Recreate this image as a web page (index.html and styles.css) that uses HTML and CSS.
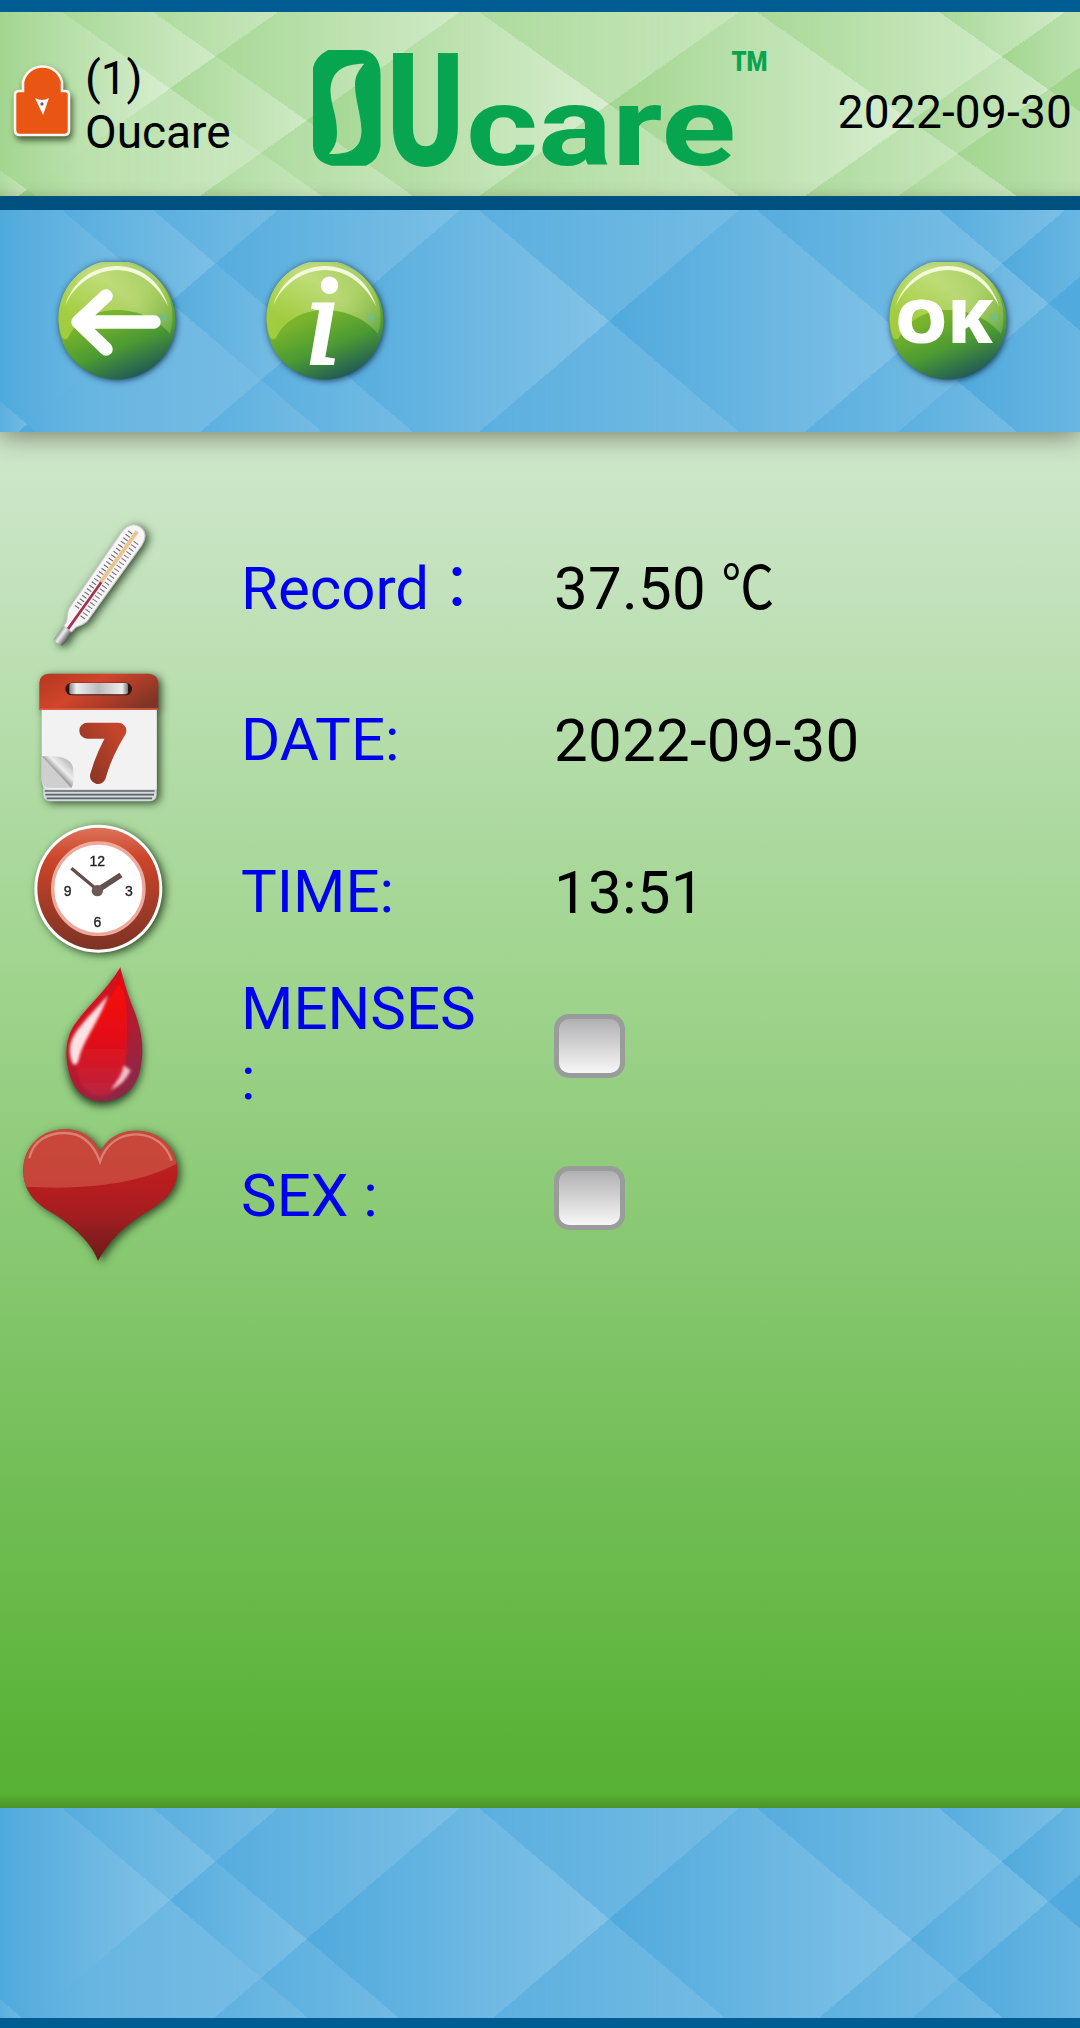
FILE: index.html
```html
<!DOCTYPE html>
<html lang="en">
<head>
<meta charset="utf-8">
<title>OUcare</title>
<link rel="stylesheet" href="styles.css">
</head>
<body>
<svg class="defs" width="0" height="0" aria-hidden="true">
  <defs>
    <linearGradient id="g0"><stop offset="0" stop-color="#fff" stop-opacity="0"/><stop offset="1" stop-color="#fff" stop-opacity="1"/></linearGradient>
    <linearGradient id="g1"><stop offset="0" stop-color="#fff" stop-opacity=".12"/><stop offset="1" stop-color="#fff" stop-opacity=".85"/></linearGradient>
    <linearGradient id="g2"><stop offset="0" stop-color="#fff" stop-opacity=".22"/><stop offset="1" stop-color="#fff" stop-opacity=".7"/></linearGradient>
    <linearGradient id="g3"><stop offset="0" stop-color="#fff" stop-opacity="0"/><stop offset="1" stop-color="#fff" stop-opacity=".5"/></linearGradient>
    <linearGradient id="g4"><stop offset="0" stop-color="#fff" stop-opacity=".15"/><stop offset=".25" stop-color="#fff" stop-opacity=".45"/><stop offset="1" stop-color="#fff" stop-opacity=".75"/></linearGradient>
    <symbol id="facets" viewBox="0 0 1080 230" preserveAspectRatio="none">
      <g shape-rendering="crispEdges">
        <polygon fill="url(#g0)" points="0,0 62,0 170,95.5 27,222 0,198"/>
        <polygon fill="url(#g2)" points="0,198 27,222 18,230 0,230"/>
        <polygon fill="url(#g1)" points="62,0 153,0 215.5,55.3 170,95.5"/>
        <polygon fill="url(#g2)" points="153,0 278,0 215.5,55.3"/>
        <polygon fill="url(#g4)" points="170,95.5 261,176 200,230 36,230 27,222"/>
        <polygon fill="url(#g1)" points="215.5,55.3 306.5,135.8 261,176 170,95.5"/>
        <polygon fill="url(#g1)" points="278,0 460,0 306.5,135.8 215.5,55.3"/>
        <polygon fill="url(#g2)" points="261,176 322,230 200,230"/>
        <polygon fill="url(#g2)" points="306.5,135.8 413,230 322,230 261,176"/>
        <polygon fill="url(#g0)" points="460,0 479,0 609,115 479,230 413,230 306.5,135.8"/>
        <polygon fill="url(#g2)" points="479,0 739,0 609,115"/>
        <polygon fill="url(#g2)" points="609,115 739,230 479,230"/>
        <polygon fill="url(#g0)" points="739,0 757,0 911,136.2 805,230 739,230 609,115"/>
        <polygon fill="url(#g1)" points="757,0 939,0 1002,55.7 911,136.2"/>
        <polygon fill="url(#g1)" points="939,0 1065,0 1002,55.7"/>
        <polygon fill="url(#g1)" points="1002,55.7 1048.5,96.9 957.5,177.4 911,136.2"/>
        <polygon fill="url(#g2)" points="911,136.2 957.5,177.4 898,230 805,230"/>
        <polygon fill="url(#g2)" points="957.5,177.4 1017,230 898,230"/>
        <polygon fill="url(#g3)" points="1065,0 1080,0 1080,69 1048.5,96.9 1002,55.7"/>
        <polygon fill="url(#g3)" points="1048.5,96.9 1080,124.7 1080,230 1017,230 957.5,177.4"/>
      </g>
    </symbol>

    <linearGradient id="ballBase" x1=".3" y1="0" x2=".7" y2="1">
      <stop offset="0" stop-color="#9cc92c"/><stop offset=".45" stop-color="#76b22c"/><stop offset=".7" stop-color="#4b9a33"/><stop offset="1" stop-color="#1b535a"/>
    </linearGradient>
    <linearGradient id="ballGloss" x1=".1" y1=".7" x2=".75" y2=".1">
      <stop offset="0" stop-color="#a6cf42"/><stop offset=".6" stop-color="#c5df82"/><stop offset="1" stop-color="#b2d476"/>
    </linearGradient>
    <linearGradient id="glossFade" x1="0" y1="0" x2="1" y2=".7">
      <stop offset="0" stop-color="#fff"/><stop offset=".6" stop-color="#ccc"/><stop offset="1" stop-color="#222"/>
    </linearGradient>
    <mask id="glossMask"><rect width="118" height="118" fill="url(#glossFade)"/></mask>
    <symbol id="ball" viewBox="0 0 118 118">
      <circle cx="59" cy="59" r="58.5" fill="url(#ballBase)"/>
      <path d="M3 72A57 57 0 1 1 112 72C100 57 80 48 59 48S18 58 10 76Q5 80 3 72Z" fill="url(#ballGloss)" mask="url(#glossMask)"/>
      <path d="M7 44C14 20 35 4 59 4S103 20 110 44C99 22 80 8 59 8S16 22 7 44Z" fill="#f3fadb"/>
      <circle cx="105" cy="56" r="4" fill="#6fc08c" opacity=".7"/>
    </symbol>

    <linearGradient id="redBar" x1="0" y1=".2" x2="1" y2=".7">
      <stop offset="0" stop-color="#b83a22"/><stop offset=".4" stop-color="#d1452b"/><stop offset=".7" stop-color="#a93c28"/><stop offset="1" stop-color="#7c3526"/>
    </linearGradient>
    <linearGradient id="ring" x1="0" y1="0" x2="0" y2="1">
      <stop offset="0" stop-color="#dc7259"/><stop offset=".25" stop-color="#cc452a"/><stop offset=".6" stop-color="#a63c28"/><stop offset="1" stop-color="#7d3324"/>
    </linearGradient>
    <linearGradient id="seven" x1="0" y1="1" x2="1" y2="0">
      <stop offset="0" stop-color="#8c3526"/><stop offset="1" stop-color="#c5452a"/>
    </linearGradient>
    <linearGradient id="clip"><stop offset="0" stop-color="#888"/><stop offset=".12" stop-color="#eee"/><stop offset=".5" stop-color="#bbb"/><stop offset=".9" stop-color="#eee"/><stop offset="1" stop-color="#777"/></linearGradient>
    <linearGradient id="curl" x1="0" y1="1" x2="1" y2="0"><stop offset="0" stop-color="#999"/><stop offset=".42" stop-color="#777"/><stop offset=".62" stop-color="#eee"/><stop offset="1" stop-color="#999"/></linearGradient>
    <linearGradient id="dropFill" gradientUnits="userSpaceOnUse" x1="0" y1="60" x2="0" y2="440"><stop offset="0" stop-color="#ff0400"/><stop offset=".6" stop-color="#df101b"/><stop offset="1" stop-color="#b92540"/></linearGradient>
    <linearGradient id="dropEdge" x1=".2" y1="0" x2=".8" y2="1"><stop offset="0" stop-color="#f00810"/><stop offset="1" stop-color="#86294a"/></linearGradient>
    <linearGradient id="heartFill" x1="0" y1="0" x2="0" y2="1"><stop offset="0" stop-color="#c0281f"/><stop offset=".4" stop-color="#b91c1e"/><stop offset=".65" stop-color="#a41e20"/><stop offset="1" stop-color="#6a1b1b"/></linearGradient>
    <linearGradient id="tip" x1="0" y1="0" x2="0" y2="1"><stop offset="0" stop-color="#999"/><stop offset=".35" stop-color="#eee"/><stop offset="1" stop-color="#555"/></linearGradient>
    <clipPath id="heartClip"><path d="M294 932C276 880 220 826 150 785C104 758 70 722 70 662C70 588 126 538 194 538C244 538 280 562 300 605C322 564 360 542 410 542C476 542 532 592 532 662C532 722 490 757 436 789C375 826 330 868 294 932Z"/></clipPath>
    <filter id="soft" x="-30%" y="-30%" width="160%" height="160%"><feGaussianBlur stdDeviation="4"/></filter>
  </defs>
</svg>

<div class="screen">
  <header class="header">
    <svg class="facets" aria-hidden="true"><use href="#facets"/></svg>
    <div class="user">
      <svg class="lock" viewBox="0 0 62 78">
        <path d="M11 31V22A20 20 0 0 1 50 22V31H53Q57 31 57 35V70Q57 75 52 75H8Q3 75 3 70V35Q3 31 7 31Z" fill="#e95513" stroke="#fdf6ee" stroke-width="2.6"/>
        <path d="M23 38Q30 42 37 38L31 55Z" fill="#fff"/><circle cx="30" cy="44" r="1.700" fill="#667"/>
      </svg>
      <div class="user-name">(1)<br>Oucare</div>
    </div>
    <svg class="logo" viewBox="310 45 460 125">
      <path fill="#08a551" fill-rule="evenodd" d="M328 50H362C374 51 380.500 61 380.500 74V146Q379 160 366 165.700H332Q314 162 313 146V68Q315 57 328 50ZM364.300 63.700C342 63.700 330 72 330.600 93C331 104 337 116 337 132C337 143 334 148 329 154C350 154.500 361.500 149 361.500 130C361 114 355 100 355 84C355 76 359 70 364.300 63.700Z"/>
      <text class="logo-u" x="387" y="165" textLength="77" lengthAdjust="spacingAndGlyphs">U</text>
      <text class="logo-care" x="466" y="165" textLength="270" lengthAdjust="spacingAndGlyphs">care</text>
      <text class="logo-tm" x="731.500" y="71" textLength="36" lengthAdjust="spacingAndGlyphs">TM</text>
    </svg>
    <div class="today">2022-09-30</div>
  </header>

  <nav class="toolbar">
    <svg class="facets" aria-hidden="true"><use href="#facets"/></svg>
    <svg class="button" viewBox="0 0 118 118">
      <use href="#ball"/>
      <path d="M48 34L20 60L48 87M22 60H96" fill="none" stroke="#fff" stroke-width="13.500" stroke-linecap="round" stroke-linejoin="round"/>
    </svg>
    <svg class="button" viewBox="0 0 118 118">
      <use href="#ball"/>
      <text class="glyph-i" x="39" y="101">i</text>
    </svg>
    <svg class="button button-ok" viewBox="0 0 118 118">
      <use href="#ball"/>
      <text class="glyph-ok" x="6" y="81" textLength="98" lengthAdjust="spacingAndGlyphs">OK</text>
    </svg>
  </nav>

  <main class="record">
    <div class="row">
      <svg class="icon" viewBox="0 36 720 456">
        <g transform="translate(176 424) rotate(-54.500) scale(1.040 1.150)">
          <path d="M-4 -13H46V15H-4Q-9 0 -4 -13Z" fill="url(#tip)"/>
          <path d="M44 -12L62 -14Q78 -24 94 -28L365 -32Q405 -28 405 0T365 31L94 30Q78 26 62 15L44 13Z" fill="#f7f5f7" stroke="#c9c9c9" stroke-width="3"/>
          <path d="M110 -13H385" stroke="#666" stroke-width="14" stroke-dasharray="3 9"/>
          <path d="M95 15H370" stroke="#777" stroke-width="15" stroke-dasharray="3 9"/>
          <path d="M205 0H390" stroke="#e9c58f" stroke-width="10"/>
          <path d="M45 1H210" stroke="#a5324a" stroke-width="7"/>
        </g>
      </svg>
      <div class="label">Record<span class="wide-colon">：</span></div>
      <div class="value">37.50 <span class="unit">℃</span></div>
    </div>

    <div class="row">
      <svg class="icon" viewBox="0 492 720 456">
        <path d="M126 610H470V885Q468 903 450 904H150Q132 903 130 885Z" fill="#d5d9da"/>
        <path d="M134 873H464M136 884H462M140 895H456" stroke="#5d666c" stroke-width="5"/>
        <path d="M125 620H470V868H150Q125 864 125 840Z" fill="#f2f2f3"/>
        <path d="M118 629V548Q120 522 146 521H446Q472 522 475 548V629Z" fill="url(#redBar)"/>
        <path d="M118 627H475" stroke="#e2563a" stroke-width="4"/>
        <rect x="196" y="548" width="200" height="38" rx="19" fill="#2b1714"/>
        <rect x="208" y="549" width="176" height="34" rx="6" fill="url(#clip)"/>
        <path d="M262 692H355Q312 762 294 828" fill="none" stroke="url(#seven)" stroke-width="48" stroke-linecap="round" stroke-linejoin="round"/>
        <path d="M125 769L214 864H148Q128 862 125 842Z" fill="#cfcfcf"/>
        <path d="M125 769C180 765 222 774 220 815Q223 850 214 864Z" fill="url(#curl)"/>
      </svg>
      <div class="label">DATE:</div>
      <div class="value">2022-09-30</div>
    </div>

    <div class="row">
      <svg class="icon" viewBox="0 948 720 456">
        <circle cx="295" cy="1166" r="192" fill="#fff"/>
        <circle cx="295" cy="1166" r="183" fill="url(#ring)"/>
        <circle cx="295" cy="1166" r="137" fill="#fff" stroke="#eda99b" stroke-width="10"/>
        <path d="M214 1105L288 1166" stroke="#62504d" stroke-width="10"/>
        <path d="M300 1166L363 1125" stroke="#62504d" stroke-width="17"/>
        <circle cx="292" cy="1172" r="17" fill="#6d5a58"/>
        <g class="clock-digits"><text x="292" y="1098">12</text><text x="387" y="1188">3</text><text x="292" y="1280">6</text><text x="203" y="1188">9</text></g>
      </svg>
      <div class="label">TIME:</div>
      <div class="value">13:51</div>
    </div>

    <div class="row">
      <svg class="icon icon-drop" viewBox="0 54 720 456">
        <path d="M361 52C320 122 257 174 223 225C198 262 195 310 204 353C216 420 255 452 306 454C363 452 407 421 421 357C438 275 416 214 393 158Q375 110 361 52Z" fill="url(#dropEdge)"/>
        <path d="M359 85C340 150 250 230 228 350C240 410 262 437 310 437C350 430 375 380 379 310C385 230 385 150 359 85Z" fill="url(#dropFill)" filter="url(#soft)"/>
        <path d="M325 135C292 175 240 222 220 260C203 290 210 325 220 343Q232 348 237 325C250 270 291 225 325 135Z" fill="#ffe1e4" filter="url(#soft)"/>
        <path d="M371 346L392 361Q376 400 333 420C350 393 366 379 371 346Z" fill="#f6bec9" filter="url(#soft)"/>
      </svg>
      <div class="label">MENSES :</div>
      <div class="value"><span class="checkbox"></span></div>
    </div>

    <div class="row">
      <svg class="icon" viewBox="0 510 720 456">
        <path d="M294 932C276 880 220 826 150 785C104 758 70 722 70 662C70 588 126 538 194 538C244 538 280 562 300 605C322 564 360 542 410 542C476 542 532 592 532 662C532 722 490 757 436 789C375 826 330 868 294 932Z" fill="url(#heartFill)"/>
        <g clip-path="url(#heartClip)"><path d="M60 530H540V635C450 690 290 725 60 709Z" fill="#cc5545" opacity=".72"/></g>
        <path d="M88 625C100 570 145 549 194 549C246 549 280 580 300 635C318 580 360 553 408 553C460 553 500 585 515 632" fill="none" stroke="#e19a90" stroke-width="7" opacity=".7"/>
      </svg>
      <div class="label">SEX :</div>
      <div class="value"><span class="checkbox"></span></div>
    </div>
  </main>

  <footer class="footer">
    <svg class="facets" aria-hidden="true"><use href="#facets"/></svg>
  </footer>
</div>
</body>
</html>
```
FILE: styles.css
```css
* { box-sizing: border-box; }

body {
  margin: 0;
  font-family: Roboto, "Liberation Sans", "Noto Sans CJK JP", sans-serif;
  color: #000;
}

.defs { position: absolute; }

.screen {
  display: flex;
  flex-direction: column;
  width: 1080px;
  height: 2028px;
  overflow: hidden;
}

/* faceted backdrop shared by the three bars */
.facets {
  position: absolute;
  inset: 0;
  width: 100%;
  height: 100%;
  opacity: .29;
}

.header, .toolbar, .footer {
  position: relative;
  display: flex;
  align-items: center;
  flex: none;
}

.header > *, .toolbar > * { flex: none; }

.header {
  z-index: 2;
  height: 210px;
  border-top: 12px solid #005d93;
  border-bottom: 14px solid #005180;
  background: #a2d68f;
  box-shadow: inset 0 -14px 12px -12px rgba(60, 80, 40, .3);
}

.header .facets { opacity: .58; }

.user {
  position: relative;
  display: flex;
  align-items: center;
  width: 310px;
  padding-left: 12px;
}

.lock {
  width: 62px;
  height: 78px;
  margin-top: -11px;
  filter: drop-shadow(2px 4px 3px rgba(30, 50, 20, .75));
}

.user-name {
  margin: 2px 0 0 11px;
  font-size: 46px;
  line-height: 54px;
}

.logo {
  position: relative;
  width: 460px;
  height: 125px;
  margin-top: 7px;
  overflow: visible;
}

.logo text { fill: #08a551; font-family: Roboto, sans-serif; font-weight: 900; }
.logo .logo-u { font-size: 158px; }
.logo .logo-care { font-size: 112px; font-weight: 700; }
.logo .logo-tm { font-size: 27px; }

.today {
  position: relative;
  margin: 15px 8px 0 auto;
  font-size: 46px;
  line-height: 54px;
  letter-spacing: .2px;
}

.toolbar {
  z-index: 1;
  height: 222px;
  padding: 0 73px 0 57.5px;
  gap: 90px;
  background: #50aadd;
  box-shadow: 0 4px 24px rgba(70, 60, 50, .6);
}

.button {
  position: relative;
  width: 118px;
  height: 118px;
  overflow: visible;
  filter: drop-shadow(1px 1px 3px rgba(10, 30, 60, .8));
}

.button-ok { margin-left: auto; }
.button text { fill: #fff; }
.glyph-i { font: italic 400 126px "Liberation Serif", serif; stroke: #fff; stroke-width: 4px; }
.glyph-ok { font: 800 60px "Open Sans", sans-serif; }

.record {
  flex: 1;
  padding-top: 80px;
  background: linear-gradient(#cce6c8 0, #cce6c8 3%, #a1d590 38.4%, #86c76f 61%, #5ab338 95%, #57b134 100%);
}

.row {
  display: grid;
  grid-template-columns: 240px 250px 1fr;
  align-items: center;
  height: 152px;
  font-size: 60px;
  line-height: 70px;
}

.icon {
  width: 240px;
  height: 152px;
  overflow: visible;
  filter: drop-shadow(3px 2px 4px rgba(20, 40, 15, .8));
}

.icon-drop { filter: drop-shadow(0 4px 4px rgba(15, 30, 15, .85)); }

.label { padding-left: 1px; color: #0000f0; }
.wide-colon { margin-left: -2px; font-family: "Noto Sans CJK JP", sans-serif; line-height: 1; }
.value { padding: 1px 0 0 64px; letter-spacing: .25px; }

.unit {
  display: inline-block;
  line-height: 1;
  transform: scaleX(.88);
  transform-origin: 4px 50%;
}

.clock-digits { font: 42px "Liberation Sans", sans-serif; text-anchor: middle; fill: #222; stroke: #222; }

.checkbox {
  display: block;
  width: 71px;
  height: 64px;
  margin-top: 3px;
  border: 5px solid #999c9b;
  border-radius: 15px;
  background: linear-gradient(#b0b0b2, #f7f7f7);
}

.footer {
  height: 220px;
  border-bottom: 10px solid #005d92;
  background: #50aadd;
  clip-path: inset(-14px 0 0 0);
}

/* shade cast upwards on the record area */
.footer::before {
  content: "";
  position: absolute;
  inset: -14px 0 auto;
  height: 14px;
  background: linear-gradient(rgba(50, 90, 20, 0), rgba(50, 90, 20, .35));
}

/* the backdrop keeps the toolbar's scale, so its lower edge is cut off */
.footer .facets { height: 222px; clip-path: inset(0 0 12px 0); }
```
